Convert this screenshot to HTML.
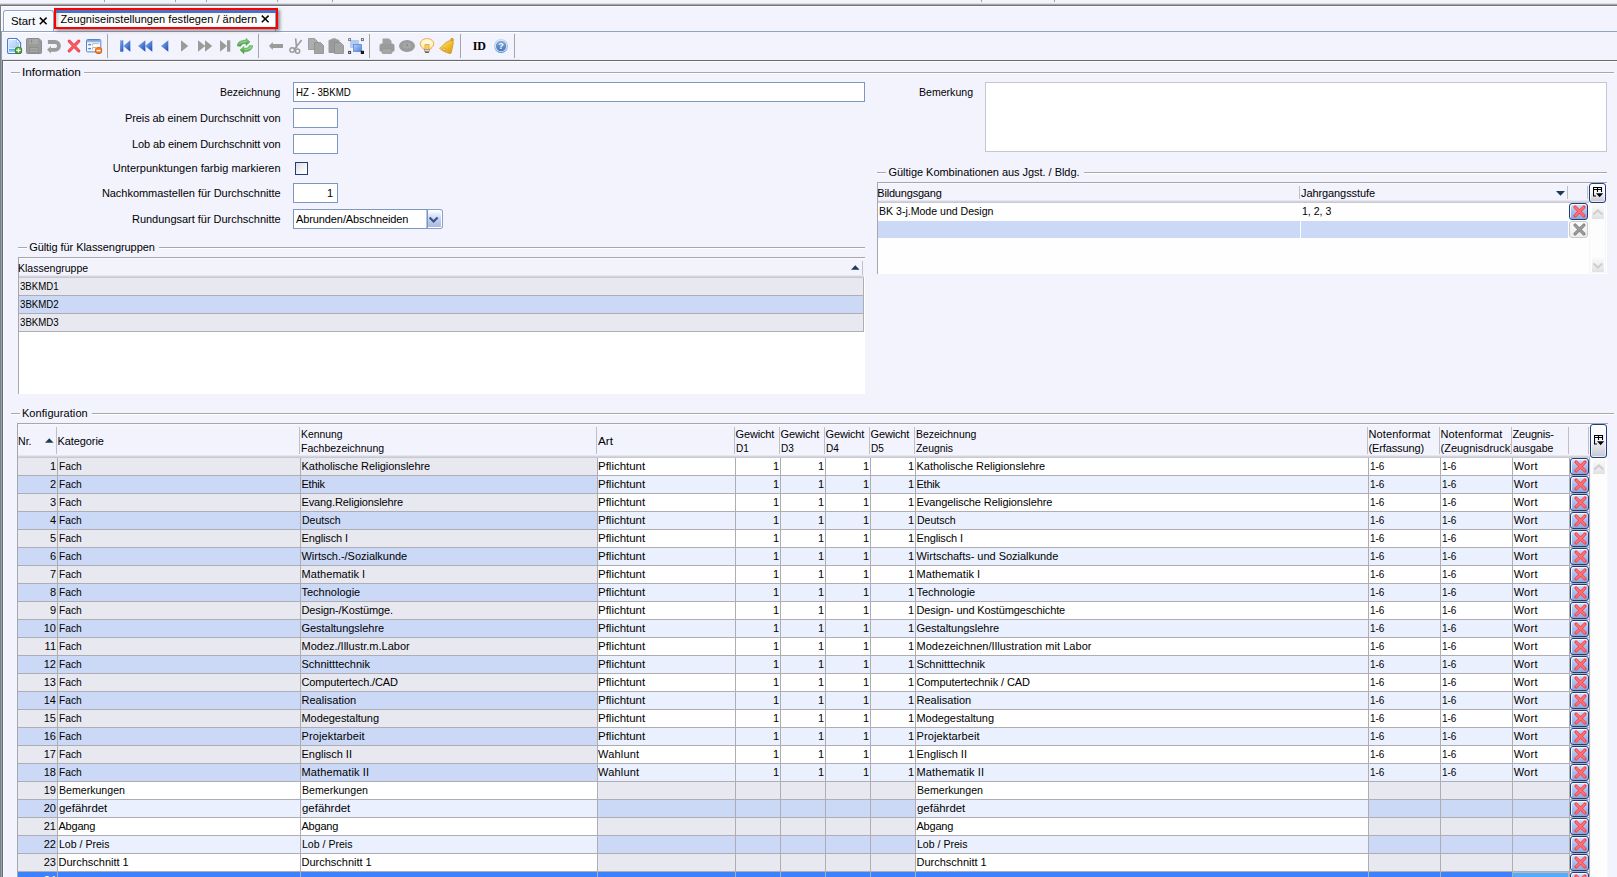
<!DOCTYPE html>
<html lang="de">
<head>
<meta charset="utf-8">
<title>Zeugniseinstellungen festlegen / ändern</title>
<style>
html,body{margin:0;padding:0;}
body{width:1617px;height:877px;overflow:hidden;background:#f3f3fe;font-family:"Liberation Sans",sans-serif;font-size:11px;color:#000;}
#app{position:relative;width:1617px;height:877px;overflow:hidden;background:#f3f3fe;}
#app div,#app svg{position:absolute;box-sizing:border-box;}
.t{height:17px;line-height:17px;white-space:nowrap;}
.sec{left:0;top:0;width:0;height:0;}
.w{color:#fff;}

</style>
</head>
<body>
<div id="app">
<div class="sec" role="banner" aria-label="Tabs und Werkzeugleiste">
<div style="left:104px;top:0px;width:1px;height:2px;background:#a2a2a8;"></div>
<div style="left:175px;top:0px;width:1px;height:2px;background:#a2a2a8;"></div>
<div style="left:206px;top:0px;width:1px;height:2px;background:#a2a2a8;"></div>
<div style="left:277px;top:0px;width:1px;height:2px;background:#a2a2a8;"></div>
<div style="left:332px;top:0px;width:1px;height:2px;background:#a2a2a8;"></div>
<div style="left:981px;top:0px;width:1px;height:2px;background:#a2a2a8;"></div>
<div style="left:1054px;top:0px;width:1px;height:2px;background:#a2a2a8;"></div>
<div style="left:0px;top:3px;width:1617px;height:1px;background:#dadae3;"></div>
<div style="left:0px;top:4px;width:1617px;height:1px;background:#a6a6ad;"></div>
<div style="left:0px;top:5px;width:1617px;height:1px;background:#747474;"></div>
<div style="left:2px;top:6px;width:1615px;height:1px;background:#fafaff;"></div>
<div style="left:0px;top:5px;width:1px;height:872px;background:#808080;"></div>
<div style="left:1px;top:6px;width:1px;height:25px;background:#fafaff;"></div>
<div style="left:1px;top:31px;width:1px;height:846px;background:#8fa3c1;"></div>
<div style="left:3px;top:10px;width:51px;height:21px;border:1px solid #8ea4c2;border-bottom:none;border-radius:3px 3px 0 0;background:#f8f8ff;box-shadow:inset 1px 1px 0 #fff;"></div>
<div class="t" style="left:11px;top:13px;transform:scaleX(1.0357);transform-origin:0 0;">Start</div>
<svg style="left:39px;top:17px" width="9" height="8" viewBox="0 0 9 8"><path d="M0.8 0.6 L7.6 7.2 M7.6 0.6 L0.8 7.2" stroke="#000" stroke-width="1.5" fill="none"/></svg>
<div style="left:2px;top:31px;width:1615px;height:1px;background:#8ea4c2;"></div>
<div style="left:2px;top:32px;width:518px;height:1px;background:#ffffff;"></div>
<div style="left:56px;top:10px;width:220px;height:21px;border-right:1px solid #8ea4c2;background:linear-gradient(#f4f2ea,#fff 60%);"></div>
<div style="left:56px;top:10px;width:220px;height:3px;background:#4a70c8;"></div>
<div style="left:56px;top:13px;width:4px;height:16px;background:linear-gradient(90deg,rgba(140,140,140,.45),rgba(255,255,255,0));"></div>
<div class="t" style="left:60.6px;top:11px;letter-spacing:0.035px;">Zeugniseinstellungen festlegen / ändern</div>
<svg style="left:260.5px;top:15px" width="9" height="8" viewBox="0 0 9 8"><path d="M0.8 0.6 L7.6 7.2 M7.6 0.6 L0.8 7.2" stroke="#000" stroke-width="1.5" fill="none"/></svg>
<div style="left:54px;top:8px;width:224px;height:21px;border:2px solid #ff0000;box-shadow:2px 2px 3px rgba(60,60,70,.55);"></div>
<div style="left:107px;top:34px;width:1px;height:24px;background:#a5a5a5;"></div>
<div style="left:258px;top:34px;width:1px;height:24px;background:#a5a5a5;"></div>
<div style="left:369px;top:34px;width:1px;height:24px;background:#a5a5a5;"></div>
<div style="left:460px;top:34px;width:1px;height:24px;background:#a5a5a5;"></div>
<div style="left:514px;top:34px;width:1px;height:24px;background:#a5a5a5;"></div>
<div style="left:2px;top:59px;width:518px;height:1px;background:#e4e4ee;"></div>
<div style="left:2px;top:60px;width:1615px;height:1px;background:#6a6a6a;"></div>
<div style="left:2px;top:60px;width:1px;height:817px;background:#6a6a6a;"></div>
<div style="left:3px;top:61px;width:1614px;height:1px;background:#fcfcff;"></div>
<div style="left:3px;top:61px;width:1px;height:816px;background:#fcfcff;"></div>
<svg style="left:7px;top:38px" width="16" height="16" viewBox="0 0 16 16"><defs><linearGradient id="gd" x1="0" y1="0" x2="1" y2="1"><stop offset="0" stop-color="#d9e8fc"/><stop offset="1" stop-color="#a6c9f4"/></linearGradient></defs>
<path d="M0.6 2 Q0.6 0.5 2 0.5 H9.6 L13.6 4.6 V14 Q13.6 15.5 12.2 15.5 H2 Q0.6 15.5 0.6 14 Z" fill="#fff" stroke="#3d7bd3" stroke-width="1.1"/>
<path d="M2 2 H9 L12.2 5.2 V10.6 H2 Z" fill="url(#gd)"/>
<path d="M9.4 1.2 V4.8 H13" fill="#fff" stroke="#8db5ea" stroke-width=".7"/>
<rect x="2" y="11.1" width="9" height="2.5" fill="#4ea5f0"/><rect x="2" y="12" width="9" height=".6" fill="#9fd0f8"/>
<circle cx="11.5" cy="12.4" r="3.7" fill="#2f7f14"/><circle cx="11.5" cy="12.2" r="2.9" fill="#57a733"/>
<path d="M11.5 10.2 V14.6 M9.3 12.4 H13.7" stroke="#fff" stroke-width="1.4"/></svg>
<svg style="left:26px;top:38px" width="16" height="16" viewBox="0 0 16 16"><path d="M0.5 1.5 Q0.5 0.5 1.5 0.5 H13 L15.5 3 V14.5 Q15.5 15.5 14.5 15.5 H1.5 Q0.5 15.5 0.5 14.5 Z" fill="#9b9b9b" stroke="#8c8c8c"/>
<rect x="3" y="1" width="9" height="5" fill="#a8a8a8"/><rect x="5" y="1.5" width="1.2" height="3.5" fill="#8a8a8a"/>
<rect x="3.5" y="9.5" width="9" height="5" fill="#a6a6a6" stroke="#8e8e8e" stroke-width=".8"/><path d="M4 12 H12" stroke="#8e8e8e" stroke-width=".8"/></svg>
<svg style="left:47px;top:39px" width="15" height="16" viewBox="0 0 15 16"><path d="M0.9 3 H8.1 A3.9 3.9 0 0 1 8.1 10.8 H3.6" fill="none" stroke="#9b9b9b" stroke-width="3.8"/>
<path d="M0.1 10.8 L3.9 7.1 V14.6 Z" fill="#9b9b9b"/></svg>
<svg style="left:67px;top:39px" width="14" height="14" viewBox="0 0 14 14"><path d="M2.2 2.2 L11.8 11.8 M11.8 2.2 L2.2 11.8" stroke="#f0474b" stroke-width="3.1" stroke-linecap="round"/>
<path d="M2.6 2.6 L11.4 11.4 M11.4 2.6 L2.6 11.4" stroke="#f86468" stroke-width="1.2" stroke-linecap="round"/></svg>
<svg style="left:86px;top:39px" width="17" height="16" viewBox="0 0 17 16"><defs><linearGradient id="gf" x1="0" y1="0" x2="0" y2="1"><stop offset="0" stop-color="#6f9de0"/><stop offset="1" stop-color="#a9c7f0"/></linearGradient></defs>
<rect x="0.5" y="0.5" width="14.3" height="12.4" rx="1" fill="#f6f5ef" stroke="#5585cf"/>
<rect x="1" y="1" width="13.3" height="2.4" fill="url(#gf)"/>
<path d="M2.2 5.7 H5 M2.2 9.6 H5" stroke="#4c7fe0" stroke-width="1.3"/>
<path d="M6.6 6.6 V4.7 H13 M6.6 10.4 V8.6 H10" stroke="#b4b4b4" stroke-width="1" fill="none"/>
<path d="M7.2 5.4 H13 V7 H7.2 Z M7.2 9.2 H10 V10.6 H7.2 Z" fill="#fff"/>
<circle cx="12.6" cy="11.5" r="3.6" fill="#cf5a0c"/><circle cx="12.6" cy="11.2" r="2.9" fill="#f07c22"/>
<path d="M10.6 11.6 H14.6" stroke="#fff" stroke-width="1.5"/></svg>
<svg style="left:120px;top:40px" width="11" height="12" viewBox="0 0 11 12"><defs><linearGradient id="gb1" x1="0" y1="0" x2="1" y2="1"><stop offset="0" stop-color="#8fbcf2"/><stop offset="1" stop-color="#1747b8"/></linearGradient></defs><rect x="0" y="0.3" width="3.3" height="11.4" fill="url(#gb1)"/><path d="M10.3 0.3 L3.3 6 L10.3 11.7 Z" fill="url(#gb1)"/></svg>
<svg style="left:138px;top:40px" width="15" height="12" viewBox="0 0 15 12"><defs><linearGradient id="gb2" x1="0" y1="0" x2="1" y2="1"><stop offset="0" stop-color="#8fbcf2"/><stop offset="1" stop-color="#1747b8"/></linearGradient></defs><path d="M7.4 0.3 L0 6 L7.4 11.7 Z" fill="url(#gb2)"/><path d="M14.3 0.3 L7 6 L14.3 11.7 Z" fill="url(#gb2)"/></svg>
<svg style="left:161px;top:40px" width="8" height="12" viewBox="0 0 8 12"><defs><linearGradient id="gb3" x1="0" y1="0" x2="1" y2="1"><stop offset="0" stop-color="#8fbcf2"/><stop offset="1" stop-color="#1747b8"/></linearGradient></defs><path d="M7.3 0.3 L0 6 L7.3 11.7 Z" fill="url(#gb3)"/></svg>
<svg style="left:181px;top:40px" width="8" height="12" viewBox="0 0 8 12"><path d="M0 0.3 L7.3 6 L0 11.7 Z" fill="#9b9b9b"/></svg>
<svg style="left:198px;top:40px" width="15" height="12" viewBox="0 0 15 12"><path d="M0 0.3 L7.3 6 L0 11.7 Z" fill="#9b9b9b"/><path d="M7 0.3 L14.3 6 L7 11.7 Z" fill="#9b9b9b"/></svg>
<svg style="left:220px;top:40px" width="11" height="12" viewBox="0 0 11 12"><path d="M0 0.3 L7 6 L0 11.7 Z" fill="#9b9b9b"/><rect x="7" y="0.3" width="3.3" height="11.4" fill="#9b9b9b"/></svg>
<svg style="left:237px;top:38px" width="16" height="16" viewBox="0 0 16 16"><defs><linearGradient id="gr" x1="0" y1="0" x2="0" y2="1"><stop offset="0" stop-color="#8fd088"/><stop offset=".55" stop-color="#5db257"/><stop offset="1" stop-color="#3f9a3c"/></linearGradient></defs>
<path d="M0.3 8 C0.4 4.4 3.6 2.1 9 2.1 V0.3 L13 3.9 L9 7.5 V5.6 C6.2 5.6 4.4 6.3 3.6 8.2 Z" fill="url(#gr)" stroke="#48a044" stroke-width=".5"/>
<path d="M15.7 7.6 C15.6 11.4 12.4 13.8 7 13.8 V15.7 L3 12 L7 8.4 V10.4 C9.8 10.4 11.6 9.7 12.4 7.6 Z" fill="url(#gr)" stroke="#48a044" stroke-width=".5"/>
<path d="M1.6 6.6 Q3.6 3.6 9 3.4" stroke="#b5e2ae" stroke-width=".8" fill="none"/><path d="M14.2 9.2 Q12.6 11.6 7.4 11.8" stroke="#b5e2ae" stroke-width=".8" fill="none"/></svg>
<svg style="left:268px;top:42px" width="16" height="8" viewBox="0 0 16 8"><path d="M1 4 L4.8 0 V2.1 H15 V5.9 H4.8 V8 Z" fill="#9b9b9b"/></svg>
<svg style="left:289px;top:38px" width="14" height="16" viewBox="0 0 14 16"><path d="M6.6 0.4 L7.6 10 M12.6 2 L5.2 11.4" stroke="#9b9b9b" stroke-width="1.6" fill="none"/>
<circle cx="3.2" cy="12" r="2.3" fill="none" stroke="#9b9b9b" stroke-width="1.5"/><circle cx="8.6" cy="13.2" r="2.1" fill="none" stroke="#9b9b9b" stroke-width="1.5"/></svg>
<svg style="left:308px;top:38px" width="16" height="16" viewBox="0 0 16 16"><path d="M0.5 0.5 H6.5 L9.5 3.5 V11.5 H0.5 Z" fill="#adadad" stroke="#919191" stroke-width=".8"/>
<path d="M6.5 4.5 H12.5 L15.5 7.5 V15.5 H6.5 Z" fill="#a3a3a3" stroke="#8d8d8d" stroke-width=".8"/></svg>
<svg style="left:328px;top:38px" width="16" height="16" viewBox="0 0 16 16"><path d="M0.5 3 Q0.5 1.5 2 1.5 H3 Q4 0.3 6 0.3 Q8 0.3 9 1.5 H10 Q11.5 1.5 11.5 3 V14 Q11.5 15 10.5 15 H1.5 Q0.5 15 0.5 14 Z" fill="#9b9b9b"/>
<path d="M6.5 4.5 H12.5 L15.5 7.5 V15.5 H6.5 Z" fill="#a3a3a3" stroke="#8d8d8d" stroke-width=".8"/></svg>
<svg style="left:348px;top:38px" width="16" height="16" viewBox="0 0 16 16"><defs><linearGradient id="gs" x1="0" y1="0" x2="1" y2="1"><stop offset="0" stop-color="#b9d0f6"/><stop offset="1" stop-color="#4f83d6"/></linearGradient></defs>
<rect x="2.5" y="2.5" width="8" height="7" fill="#b4ccf5" stroke="#a0bcee" stroke-width=".6"/>
<rect x="5.5" y="6.5" width="8" height="7" fill="url(#gs)" stroke="#4a7fd8" stroke-width=".7"/>
<rect x="0.6" y="0.6" width="2" height="2" fill="#f3f3fe" stroke="#777" stroke-width=".9"/>
<rect x="13.4" y="0.6" width="2" height="2" fill="#f3f3fe" stroke="#666" stroke-width=".9"/>
<rect x="0.6" y="13.4" width="2" height="2" fill="#f3f3fe" stroke="#444" stroke-width="1"/>
<rect x="13.4" y="13.4" width="2" height="2" fill="#ddd" stroke="#111" stroke-width="1.2"/></svg>
<svg style="left:379px;top:38px" width="16" height="16" viewBox="0 0 16 16"><path d="M3.5 0.5 H10 L12.5 3 V7 H3.5 Z" fill="#a1a1a1"/>
<path d="M0.5 8 Q0.5 5.5 3 5.5 H13 Q15.5 5.5 15.5 8 V12.5 Q15.5 13.5 14.5 13.5 H1.5 Q0.5 13.5 0.5 12.5 Z" fill="#9b9b9b"/>
<rect x="3" y="10.5" width="10" height="5" rx="1" fill="#a6a6a6" stroke="#909090" stroke-width=".7"/></svg>
<svg style="left:399px;top:39.8px" width="16" height="12" viewBox="0 0 16 12"><ellipse cx="8" cy="6" rx="8" ry="5.9" fill="#9b9b9b"/><ellipse cx="8" cy="5.4" rx="4.4" ry="3" fill="#a6a6a6"/><circle cx="8" cy="5" r="1" fill="#858585"/></svg>
<svg style="left:419px;top:38px" width="16" height="16" viewBox="0 0 16 16"><defs><radialGradient id="gl" cx=".5" cy=".4" r=".6"><stop offset="0" stop-color="#fffef0"/><stop offset=".7" stop-color="#fdf3c4"/><stop offset="1" stop-color="#f6c56a"/></radialGradient></defs>
<path d="M8 0.6 C3.6 0.6 1.2 3.4 1.2 6 C1.2 8.6 3.6 9.6 5 11.6 H11 C12.4 9.6 14.8 8.6 14.8 6 C14.8 3.4 12.4 0.6 8 0.6 Z" fill="url(#gl)" stroke="#f0a04a" stroke-width=".9"/>
<rect x="6" y="6.4" width="4" height="5" fill="#f8d648" stroke="#eb9c3c" stroke-width=".8"/>
<rect x="5.4" y="11.6" width="5.2" height="2" fill="#d8d8d8" stroke="#8e8e8e" stroke-width=".6"/>
<rect x="6" y="13.6" width="4" height="1.4" fill="#666"/></svg>
<svg style="left:439px;top:38px" width="16" height="16" viewBox="0 0 16 16"><defs><linearGradient id="gbell" x1="0" y1="0" x2="1" y2="1"><stop offset="0" stop-color="#fde98e"/><stop offset=".55" stop-color="#f0bd2c"/><stop offset="1" stop-color="#d3940f"/></linearGradient></defs>
<circle cx="13" cy="1.8" r="1.5" fill="#e9a72a" stroke="#c58414" stroke-width=".6"/>
<path d="M12.4 2.6 C8.6 2.4 5.6 5.4 3.6 7.8 C2.4 9.2 1 9.6 0.6 10.2 C0.4 11 6.4 14.8 11.4 15.6 C12.4 15.6 12.6 13.4 13 11.2 C13.6 8.4 14.6 5.6 14.2 3.4 Z" fill="url(#gbell)" stroke="#cf9020" stroke-width=".7"/>
<ellipse cx="5.4" cy="11.4" rx="1.7" ry="1.1" fill="#fff2b8" stroke="#b87a14" stroke-width=".6" transform="rotate(28 5.4 11.4)"/></svg>
<div style="left:472.8px;top:38px;height:17px;line-height:17px;font-family:'Liberation Serif',serif;font-weight:bold;font-size:12px;letter-spacing:-0.2px;">ID</div>
<svg style="left:494px;top:39px" width="15" height="15" viewBox="0 0 15 15"><defs><linearGradient id="gh" x1="0" y1="0" x2="0" y2="1"><stop offset="0" stop-color="#86a8d6"/><stop offset="1" stop-color="#4277b9"/></linearGradient>
<linearGradient id="gh2" x1="0" y1="0" x2="0" y2="1"><stop offset="0" stop-color="#c2d8f5"/><stop offset=".7" stop-color="#9dc0ee"/><stop offset="1" stop-color="#4f86d2"/></linearGradient></defs>
<circle cx="7.1" cy="7" r="7" fill="url(#gh2)"/><circle cx="7.1" cy="7" r="5.9" fill="#e4eefb"/><circle cx="7.1" cy="7" r="5.2" fill="url(#gh)"/>
<text x="7.1" y="10.2" text-anchor="middle" font-family="Liberation Sans, sans-serif" font-weight="bold" font-size="9" fill="#fff">?</text></svg>
</div>
<div class="sec" role="form" aria-label="Information">
<div style="left:11px;top:72px;width:9px;height:1px;background:#a7a7ad;"></div>
<div style="left:11px;top:73px;width:9px;height:1px;background:#ffffff;"></div>
<div style="left:83.9px;top:72px;width:1530.1px;height:1px;background:#a7a7ad;"></div>
<div style="left:83.9px;top:73px;width:1530.1px;height:1px;background:#ffffff;"></div>
<div class="t" style="left:21.9px;top:64px;transform:scaleX(1.0703);transform-origin:0 0;">Information</div>
<div class="t" style="left:220.29px;top:84px;transform:scaleX(0.9482);transform-origin:0 0;">Bezeichnung</div>
<div class="t" style="left:124.98px;top:110px;letter-spacing:-0.091px;">Preis ab einem Durchschnitt von</div>
<div class="t" style="left:131.98px;top:136px;letter-spacing:-0.108px;">Lob ab einem Durchschnitt von</div>
<div class="t" style="left:112.68px;top:160px;letter-spacing:0.032px;">Unterpunktungen farbig markieren</div>
<div class="t" style="left:101.88px;top:185px;letter-spacing:-0.031px;">Nachkommastellen für Durchschnitte</div>
<div class="t" style="left:131.97px;top:211px;letter-spacing:-0.02px;">Rundungsart für Durchschnitte</div>
<div style="left:293px;top:82px;width:572px;height:20px;background:#fff;border:1px solid #7c98c2;"></div>
<div class="t" style="left:296px;top:84px;transform:scaleX(0.8767);transform-origin:0 0;">HZ - 3BKMD</div>
<div style="left:293px;top:108px;width:45px;height:20px;background:#fff;border:1px solid #7c98c2;"></div>
<div style="left:293px;top:134px;width:45px;height:20px;background:#fff;border:1px solid #7c98c2;"></div>
<div style="left:295px;top:162px;width:13px;height:13px;border:1px solid #1c3f7c;background:linear-gradient(135deg,#dcdce0,#fafafa 70%,#fff);"></div>
<div style="left:293px;top:183px;width:45px;height:20px;background:#fff;border:1px solid #7c98c2;"></div>
<div class="t" style="left:326.88px;top:185px;">1</div>
<div style="left:293px;top:209px;width:135px;height:20px;background:#fff;border:1px solid #7c98c2;"></div>
<div class="t" style="left:296px;top:211px;letter-spacing:-0.103px;">Abrunden/Abschneiden</div>
<div style="left:426px;top:210px;width:1px;height:18px;background:#b5c5de;"></div>
<div style="left:428px;top:209px;width:15px;height:20px;border:1px solid #86a0c6;border-left:none;border-radius:0 3px 3px 0;background:#fff;"></div>
<div style="left:428px;top:211px;width:13px;height:16px;border-radius:1px;background:linear-gradient(#fbfcff,#c3d1f6 50%,#aab9df);"></div>
<svg style="left:428px;top:215px" width="12" height="9" viewBox="0 0 12 9"><path d="M1.6 2.4 L5.6 6.4 L9.6 2.4" stroke="#3c5479" stroke-width="2.1" fill="none"/></svg>
<div class="t" style="left:918.5px;top:84px;transform:scaleX(0.9602);transform-origin:0 0;">Bemerkung</div>
<div style="left:985px;top:82px;width:622px;height:70px;background:#fff;border:1px solid #c6c6cf;"></div>
<div style="left:877px;top:172px;width:9px;height:1px;background:#a7a7ad;"></div>
<div style="left:877px;top:173px;width:9px;height:1px;background:#ffffff;"></div>
<div style="left:1084.0px;top:172px;width:523.0px;height:1px;background:#a7a7ad;"></div>
<div style="left:1084.0px;top:173px;width:523.0px;height:1px;background:#ffffff;"></div>
<div class="t" style="left:888.5px;top:164px;letter-spacing:-0.041px;">Gültige Kombinationen aus Jgst. / Bldg.</div>
<div style="left:878px;top:203px;width:729px;height:71px;background:#fefeff;"></div>
<div style="left:877px;top:182px;width:730px;height:1px;background:#a7a7ad;"></div>
<div style="left:877px;top:183px;width:730px;height:1px;background:#f9f9ff;"></div>
<div style="left:877px;top:182px;width:1px;height:92px;background:#a7a7ad;"></div>
<div style="left:878px;top:200px;width:711px;height:1px;background:#e6e6ee;"></div>
<div style="left:878px;top:201px;width:711px;height:1px;background:#d4d4dc;"></div>
<div style="left:878px;top:202px;width:711px;height:1px;background:#c9c9d2;"></div>
<div class="t" style="left:877.3px;top:185px;letter-spacing:-0.195px;">Bildungsgang</div>
<div class="t" style="left:1301px;top:185px;letter-spacing:-0.092px;">Jahrgangsstufe</div>
<div style="left:1299px;top:186px;width:1px;height:13px;background:#bfbfc7;"></div>
<div style="left:1567px;top:186px;width:1px;height:13px;background:#bfbfc7;"></div>
<div style="left:1587px;top:186px;width:1px;height:13px;background:#bfbfc7;"></div>
<svg style="left:1556px;top:191px" width="9" height="5" viewBox="0 0 9 5"><path d="M0 0 L4.5 4.7 L9 0 Z" fill="#1d3a56"/></svg>
<div style="left:1589px;top:183px;width:17px;height:20px;border:1px solid #1c3f7c;border-radius:3px;background:linear-gradient(#ffffff,#f6f6fb 45%,#c6c6d3);box-shadow:inset 0 0 0 1px rgba(255,255,255,.6);"></div>
<svg style="left:1592.5px;top:186.6px" width="11" height="11" viewBox="0 0 11 11"><path d="M0.5 0.5 H8.5 M0.5 2.5 H8.5 M0.5 0 V9 H3 M4.5 0.5 V5 M8.5 0 V5" stroke="#000" stroke-width="1.1" fill="none"/><path d="M3 6.2 H10.2 L6.6 10.2 Z" fill="#000"/></svg>
<div class="t" style="left:879px;top:203px;transform:scaleX(0.9596);transform-origin:0 0;">BK 3-j.Mode und Design</div>
<div class="t" style="left:1302px;top:203px;transform:scaleX(0.9586);transform-origin:0 0;">1, 2, 3</div>
<div style="left:878px;top:221px;width:422px;height:17px;background:#cbd9f7;"></div>
<div style="left:1301px;top:221px;width:267px;height:17px;background:#cbd9f7;"></div>
<div style="left:1569px;top:203px;width:19px;height:17px;border:1px solid #1c3f7c;border-radius:3px;background:linear-gradient(#d4e2fb,#a9c0ee 45%,#8ca7e0);box-shadow:inset 1px 1px 0 rgba(255,255,255,.85);"></div>
<svg style="left:1572.6px;top:204.5px" width="13" height="13" viewBox="0 0 13 13"><path d="M2.1 2.1 L10.9 10.9 M10.9 2.1 L2.1 10.9" stroke="#f64448" stroke-width="3.3" stroke-linecap="round"/><path d="M2.4 2.4 L10.6 10.6 M10.6 2.4 L2.4 10.6" stroke="#ff7478" stroke-width="1.5" stroke-linecap="round"/></svg>
<div style="left:1569px;top:221px;width:19px;height:17px;border:1px solid #c9c9c9;border-radius:3px;background:linear-gradient(#fbfbfb,#ececec);"></div>
<svg style="left:1572.6px;top:222.5px" width="13" height="13" viewBox="0 0 13 13"><path d="M2.1 2.1 L10.9 10.9 M10.9 2.1 L2.1 10.9" stroke="#8a8a8a" stroke-width="3.3" stroke-linecap="round"/><path d="M2.4 2.4 L10.6 10.6 M10.6 2.4 L2.4 10.6" stroke="#9a9a9a" stroke-width="1.5" stroke-linecap="round"/></svg>
<div style="left:1589px;top:203px;width:17px;height:70px;background:#f5f5fc;"></div>
<div style="left:1590px;top:203px;width:15px;height:69px;background:#fdfdfe;"></div>
<div style="left:1592px;top:204px;width:12px;height:15px;background:linear-gradient(#fbfbfc,#f0f0f1 50%,#e1e1e3);"></div>
<svg style="left:1592px;top:207.5px" width="12" height="9" viewBox="0 0 12 9"><path d="M1.4 6.6 L5.9 2.4 L10.4 6.6" stroke="#cfcfd1" stroke-width="2.1" fill="none"/></svg>
<div style="left:1592px;top:257px;width:12px;height:15px;background:linear-gradient(#fbfbfc,#f0f0f1 50%,#e1e1e3);"></div>
<svg style="left:1592px;top:260.5px" width="12" height="9" viewBox="0 0 12 9"><path d="M1.4 2.4 L5.9 6.6 L10.4 2.4" stroke="#cfcfd1" stroke-width="2.1" fill="none"/></svg>
<div style="left:18px;top:247px;width:9px;height:1px;background:#a7a7ad;"></div>
<div style="left:18px;top:248px;width:9px;height:1px;background:#ffffff;"></div>
<div style="left:159.2px;top:247px;width:705.8px;height:1px;background:#a7a7ad;"></div>
<div style="left:159.2px;top:248px;width:705.8px;height:1px;background:#ffffff;"></div>
<div class="t" style="left:29.2px;top:239px;letter-spacing:-0.061px;">Gültig für Klassengruppen</div>
<div style="left:19px;top:258px;width:846px;height:136px;background:#ffffff;"></div>
<div style="left:19px;top:258px;width:846px;height:18px;background:#f3f3fe;"></div>
<div style="left:18px;top:257px;width:847px;height:1px;background:#a7a7ad;"></div>
<div style="left:18px;top:258px;width:847px;height:1px;background:#f9f9ff;"></div>
<div style="left:18px;top:257px;width:1px;height:137px;background:#a7a7ad;"></div>
<div style="left:19px;top:275px;width:845px;height:1px;background:#e6e6ee;"></div>
<div style="left:19px;top:276px;width:845px;height:1px;background:#d4d4dc;"></div>
<div style="left:19px;top:277px;width:845px;height:1px;background:#c9c9d2;"></div>
<div class="t" style="left:18px;top:260px;transform:scaleX(0.9554);transform-origin:0 0;">Klassengruppe</div>
<svg style="left:851px;top:265px" width="9" height="5" viewBox="0 0 9 5"><path d="M0 4.7 L4.3 0.2 L8.6 4.7 Z" fill="#1d3a56"/></svg>
<div style="left:862px;top:261px;width:1px;height:14px;background:#bfbfc7;"></div>
<div style="left:19px;top:278px;width:844px;height:17px;background:#e8e8f1;"></div>
<div style="left:19px;top:295px;width:845px;height:1px;background:#adadb2;"></div>
<div class="t" style="left:20px;top:278px;transform:scaleX(0.8747);transform-origin:0 0;">3BKMD1</div>
<div style="left:19px;top:296px;width:844px;height:17px;background:#cbd9f7;"></div>
<div style="left:19px;top:313px;width:845px;height:1px;background:#adadb2;"></div>
<div class="t" style="left:20px;top:296px;transform:scaleX(0.8793);transform-origin:0 0;">3BKMD2</div>
<div style="left:19px;top:314px;width:844px;height:17px;background:#e8e8f1;"></div>
<div style="left:19px;top:331px;width:845px;height:1px;background:#adadb2;"></div>
<div class="t" style="left:20px;top:314px;transform:scaleX(0.8793);transform-origin:0 0;">3BKMD3</div>
<div style="left:863px;top:278px;width:1px;height:54px;background:#adadb2;"></div>
</div>
<div class="sec" role="grid" aria-label="Konfiguration">
<div style="left:11px;top:413px;width:9px;height:1px;background:#a7a7ad;"></div>
<div style="left:11px;top:414px;width:9px;height:1px;background:#ffffff;"></div>
<div style="left:92.4px;top:413px;width:1521.6px;height:1px;background:#a7a7ad;"></div>
<div style="left:92.4px;top:414px;width:1521.6px;height:1px;background:#ffffff;"></div>
<div class="t" style="left:21.9px;top:405px;letter-spacing:0.083px;">Konfiguration</div>
<div style="left:17px;top:423px;width:1591px;height:1px;background:#a7a7ad;"></div>
<div style="left:17px;top:424px;width:1573px;height:1px;background:#f9f9ff;"></div>
<div style="left:17px;top:423px;width:1px;height:454px;background:#a7a7ad;"></div>
<div style="left:18px;top:455px;width:1572px;height:1px;background:#e6e6ee;"></div>
<div style="left:18px;top:456px;width:1572px;height:1px;background:#d4d4dc;"></div>
<div style="left:18px;top:457px;width:1572px;height:1px;background:#c9c9d2;"></div>
<div style="left:56px;top:427px;width:1px;height:27px;background:#bfbfc7;"></div>
<div style="left:299px;top:427px;width:1px;height:27px;background:#bfbfc7;"></div>
<div style="left:596px;top:427px;width:1px;height:27px;background:#bfbfc7;"></div>
<div style="left:734px;top:427px;width:1px;height:27px;background:#bfbfc7;"></div>
<div style="left:779px;top:427px;width:1px;height:27px;background:#bfbfc7;"></div>
<div style="left:824px;top:427px;width:1px;height:27px;background:#bfbfc7;"></div>
<div style="left:869px;top:427px;width:1px;height:27px;background:#bfbfc7;"></div>
<div style="left:914px;top:427px;width:1px;height:27px;background:#bfbfc7;"></div>
<div style="left:1367px;top:427px;width:1px;height:27px;background:#bfbfc7;"></div>
<div style="left:1439px;top:427px;width:1px;height:27px;background:#bfbfc7;"></div>
<div style="left:1511px;top:427px;width:1px;height:27px;background:#bfbfc7;"></div>
<div style="left:1568px;top:427px;width:1px;height:27px;background:#bfbfc7;"></div>
<div style="left:1588px;top:427px;width:1px;height:27px;background:#bfbfc7;"></div>
<div class="t" style="left:17.5px;top:433px;transform:scaleX(0.9643);transform-origin:0 0;">Nr.</div>
<svg style="left:44.7px;top:438.2px" width="9" height="5" viewBox="0 0 9 5"><path d="M0 4.7 L4.3 0.2 L8.6 4.7 Z" fill="#1d3a56"/></svg>
<div class="t" style="left:57.5px;top:433px;letter-spacing:-0.084px;">Kategorie</div>
<div class="t" style="left:300.5px;top:426px;transform:scaleX(0.9402);transform-origin:0 0;">Kennung</div>
<div class="t" style="left:300.5px;top:440px;transform:scaleX(0.9571);transform-origin:0 0;">Fachbezeichnung</div>
<div class="t" style="left:597.5px;top:433px;transform:scaleX(1.0643);transform-origin:0 0;">Art</div>
<div class="t" style="left:735.5px;top:426px;letter-spacing:-0.147px;">Gewicht</div>
<div class="t" style="left:735.5px;top:440px;transform:scaleX(0.9108);transform-origin:0 0;">D1</div>
<div class="t" style="left:780.5px;top:426px;letter-spacing:-0.147px;">Gewicht</div>
<div class="t" style="left:780.5px;top:440px;transform:scaleX(0.9108);transform-origin:0 0;">D3</div>
<div class="t" style="left:825.5px;top:426px;letter-spacing:-0.147px;">Gewicht</div>
<div class="t" style="left:825.5px;top:440px;transform:scaleX(0.9108);transform-origin:0 0;">D4</div>
<div class="t" style="left:870.5px;top:426px;letter-spacing:-0.147px;">Gewicht</div>
<div class="t" style="left:870.5px;top:440px;transform:scaleX(0.9108);transform-origin:0 0;">D5</div>
<div class="t" style="left:915.5px;top:426px;transform:scaleX(0.9482);transform-origin:0 0;">Bezeichnung</div>
<div class="t" style="left:915.5px;top:440px;transform:scaleX(0.9462);transform-origin:0 0;">Zeugnis</div>
<div class="t" style="left:1368.5px;top:426px;letter-spacing:0.123px;">Notenformat</div>
<div class="t" style="left:1368.5px;top:440px;letter-spacing:-0.119px;">(Erfassung)</div>
<div class="t" style="left:1440.5px;top:426px;letter-spacing:0.123px;">Notenformat</div>
<div class="t" style="left:1440.5px;top:440px;width:70.5px;overflow:hidden;">(Zeugnisdruck)</div>
<div class="t" style="left:1512.5px;top:426px;letter-spacing:-0.191px;">Zeugnis-</div>
<div class="t" style="left:1512.5px;top:440px;transform:scaleX(0.9551);transform-origin:0 0;">ausgabe</div>
<div style="left:1590px;top:424px;width:17px;height:34px;border:1px solid #1c3f7c;border-radius:3px;background:linear-gradient(#ffffff,#f6f6fb 45%,#c6c6d3);box-shadow:inset 0 0 0 1px rgba(255,255,255,.6);"></div>
<svg style="left:1593.5px;top:435px" width="11" height="11" viewBox="0 0 11 11"><path d="M0.5 0.5 H8.5 M0.5 2.5 H8.5 M0.5 0 V9 H3 M4.5 0.5 V5 M8.5 0 V5" stroke="#000" stroke-width="1.1" fill="none"/><path d="M3 6.2 H10.2 L6.6 10.2 Z" fill="#000"/></svg>
<div style="left:18px;top:458px;width:579px;height:17px;background:#e8e8f1;"></div>
<div style="left:598px;top:458px;width:971px;height:17px;background:#ffffff;"></div>
<div style="left:18px;top:475px;width:1572px;height:1px;background:#adadb2;"></div>
<div class="t" style="left:49.88px;top:458px;">1</div>
<div class="t" style="left:58.5px;top:458px;transform:scaleX(0.9327);transform-origin:0 0;">Fach</div>
<div class="t" style="left:301.5px;top:458px;letter-spacing:-0.037px;">Katholische Religionslehre</div>
<div class="t" style="left:598px;top:458px;transform:scaleX(1.0423);transform-origin:0 0;">Pflichtunt</div>
<div class="t" style="left:772.88px;top:458px;">1</div>
<div class="t" style="left:817.88px;top:458px;">1</div>
<div class="t" style="left:862.88px;top:458px;">1</div>
<div class="t" style="left:907.88px;top:458px;">1</div>
<div class="t" style="left:1370.3px;top:458px;transform:scaleX(0.9062);transform-origin:0 0;">1-6</div>
<div class="t" style="left:1442.3px;top:458px;transform:scaleX(0.9062);transform-origin:0 0;">1-6</div>
<div class="t" style="left:1513.7px;top:458px;letter-spacing:0.245px;">Wort</div>
<div class="t" style="left:916.5px;top:458px;letter-spacing:-0.037px;">Katholische Religionslehre</div>
<div style="left:1570px;top:458px;width:19px;height:17px;border:1px solid #1c3f7c;border-radius:3px;background:linear-gradient(#d4e2fb,#a9c0ee 45%,#8ca7e0);box-shadow:inset 1px 1px 0 rgba(255,255,255,.85);"></div>
<svg style="left:1573.6px;top:459.5px" width="13" height="13" viewBox="0 0 13 13"><path d="M2.1 2.1 L10.9 10.9 M10.9 2.1 L2.1 10.9" stroke="#f64448" stroke-width="3.3" stroke-linecap="round"/><path d="M2.4 2.4 L10.6 10.6 M10.6 2.4 L2.4 10.6" stroke="#ff7478" stroke-width="1.5" stroke-linecap="round"/></svg>
<div style="left:18px;top:476px;width:579px;height:17px;background:#cbd9f7;"></div>
<div style="left:598px;top:476px;width:971px;height:17px;background:#eaf0fe;"></div>
<div style="left:18px;top:493px;width:1572px;height:1px;background:#adadb2;"></div>
<div class="t" style="left:49.88px;top:476px;">2</div>
<div class="t" style="left:58.5px;top:476px;transform:scaleX(0.9327);transform-origin:0 0;">Fach</div>
<div class="t" style="left:301.5px;top:476px;letter-spacing:-0.214px;">Ethik</div>
<div class="t" style="left:598px;top:476px;transform:scaleX(1.0423);transform-origin:0 0;">Pflichtunt</div>
<div class="t" style="left:772.88px;top:476px;">1</div>
<div class="t" style="left:817.88px;top:476px;">1</div>
<div class="t" style="left:862.88px;top:476px;">1</div>
<div class="t" style="left:907.88px;top:476px;">1</div>
<div class="t" style="left:1370.3px;top:476px;transform:scaleX(0.9062);transform-origin:0 0;">1-6</div>
<div class="t" style="left:1442.3px;top:476px;transform:scaleX(0.9062);transform-origin:0 0;">1-6</div>
<div class="t" style="left:1513.7px;top:476px;letter-spacing:0.245px;">Wort</div>
<div class="t" style="left:916.5px;top:476px;letter-spacing:-0.214px;">Ethik</div>
<div style="left:1570px;top:476px;width:19px;height:17px;border:1px solid #1c3f7c;border-radius:3px;background:linear-gradient(#d4e2fb,#a9c0ee 45%,#8ca7e0);box-shadow:inset 1px 1px 0 rgba(255,255,255,.85);"></div>
<svg style="left:1573.6px;top:477.5px" width="13" height="13" viewBox="0 0 13 13"><path d="M2.1 2.1 L10.9 10.9 M10.9 2.1 L2.1 10.9" stroke="#f64448" stroke-width="3.3" stroke-linecap="round"/><path d="M2.4 2.4 L10.6 10.6 M10.6 2.4 L2.4 10.6" stroke="#ff7478" stroke-width="1.5" stroke-linecap="round"/></svg>
<div style="left:18px;top:494px;width:579px;height:17px;background:#e8e8f1;"></div>
<div style="left:598px;top:494px;width:971px;height:17px;background:#ffffff;"></div>
<div style="left:18px;top:511px;width:1572px;height:1px;background:#adadb2;"></div>
<div class="t" style="left:49.88px;top:494px;">3</div>
<div class="t" style="left:58.5px;top:494px;transform:scaleX(0.9327);transform-origin:0 0;">Fach</div>
<div class="t" style="left:301.5px;top:494px;letter-spacing:-0.118px;">Evang.Religionslehre</div>
<div class="t" style="left:598px;top:494px;transform:scaleX(1.0423);transform-origin:0 0;">Pflichtunt</div>
<div class="t" style="left:772.88px;top:494px;">1</div>
<div class="t" style="left:817.88px;top:494px;">1</div>
<div class="t" style="left:862.88px;top:494px;">1</div>
<div class="t" style="left:907.88px;top:494px;">1</div>
<div class="t" style="left:1370.3px;top:494px;transform:scaleX(0.9062);transform-origin:0 0;">1-6</div>
<div class="t" style="left:1442.3px;top:494px;transform:scaleX(0.9062);transform-origin:0 0;">1-6</div>
<div class="t" style="left:1513.7px;top:494px;letter-spacing:0.245px;">Wort</div>
<div class="t" style="left:916.5px;top:494px;letter-spacing:-0.088px;">Evangelische Religionslehre</div>
<div style="left:1570px;top:494px;width:19px;height:17px;border:1px solid #1c3f7c;border-radius:3px;background:linear-gradient(#d4e2fb,#a9c0ee 45%,#8ca7e0);box-shadow:inset 1px 1px 0 rgba(255,255,255,.85);"></div>
<svg style="left:1573.6px;top:495.5px" width="13" height="13" viewBox="0 0 13 13"><path d="M2.1 2.1 L10.9 10.9 M10.9 2.1 L2.1 10.9" stroke="#f64448" stroke-width="3.3" stroke-linecap="round"/><path d="M2.4 2.4 L10.6 10.6 M10.6 2.4 L2.4 10.6" stroke="#ff7478" stroke-width="1.5" stroke-linecap="round"/></svg>
<div style="left:18px;top:512px;width:579px;height:17px;background:#cbd9f7;"></div>
<div style="left:598px;top:512px;width:971px;height:17px;background:#eaf0fe;"></div>
<div style="left:18px;top:529px;width:1572px;height:1px;background:#adadb2;"></div>
<div class="t" style="left:49.88px;top:512px;">4</div>
<div class="t" style="left:58.5px;top:512px;transform:scaleX(0.9327);transform-origin:0 0;">Fach</div>
<div class="t" style="left:301.5px;top:512px;transform:scaleX(0.9569);transform-origin:0 0;">Deutsch</div>
<div class="t" style="left:598px;top:512px;transform:scaleX(1.0423);transform-origin:0 0;">Pflichtunt</div>
<div class="t" style="left:772.88px;top:512px;">1</div>
<div class="t" style="left:817.88px;top:512px;">1</div>
<div class="t" style="left:862.88px;top:512px;">1</div>
<div class="t" style="left:907.88px;top:512px;">1</div>
<div class="t" style="left:1370.3px;top:512px;transform:scaleX(0.9062);transform-origin:0 0;">1-6</div>
<div class="t" style="left:1442.3px;top:512px;transform:scaleX(0.9062);transform-origin:0 0;">1-6</div>
<div class="t" style="left:1513.7px;top:512px;letter-spacing:0.245px;">Wort</div>
<div class="t" style="left:916.5px;top:512px;transform:scaleX(0.9569);transform-origin:0 0;">Deutsch</div>
<div style="left:1570px;top:512px;width:19px;height:17px;border:1px solid #1c3f7c;border-radius:3px;background:linear-gradient(#d4e2fb,#a9c0ee 45%,#8ca7e0);box-shadow:inset 1px 1px 0 rgba(255,255,255,.85);"></div>
<svg style="left:1573.6px;top:513.5px" width="13" height="13" viewBox="0 0 13 13"><path d="M2.1 2.1 L10.9 10.9 M10.9 2.1 L2.1 10.9" stroke="#f64448" stroke-width="3.3" stroke-linecap="round"/><path d="M2.4 2.4 L10.6 10.6 M10.6 2.4 L2.4 10.6" stroke="#ff7478" stroke-width="1.5" stroke-linecap="round"/></svg>
<div style="left:18px;top:530px;width:579px;height:17px;background:#e8e8f1;"></div>
<div style="left:598px;top:530px;width:971px;height:17px;background:#ffffff;"></div>
<div style="left:18px;top:547px;width:1572px;height:1px;background:#adadb2;"></div>
<div class="t" style="left:49.88px;top:530px;">5</div>
<div class="t" style="left:58.5px;top:530px;transform:scaleX(0.9327);transform-origin:0 0;">Fach</div>
<div class="t" style="left:301.5px;top:530px;letter-spacing:-0.137px;">Englisch I</div>
<div class="t" style="left:598px;top:530px;transform:scaleX(1.0423);transform-origin:0 0;">Pflichtunt</div>
<div class="t" style="left:772.88px;top:530px;">1</div>
<div class="t" style="left:817.88px;top:530px;">1</div>
<div class="t" style="left:862.88px;top:530px;">1</div>
<div class="t" style="left:907.88px;top:530px;">1</div>
<div class="t" style="left:1370.3px;top:530px;transform:scaleX(0.9062);transform-origin:0 0;">1-6</div>
<div class="t" style="left:1442.3px;top:530px;transform:scaleX(0.9062);transform-origin:0 0;">1-6</div>
<div class="t" style="left:1513.7px;top:530px;letter-spacing:0.245px;">Wort</div>
<div class="t" style="left:916.5px;top:530px;letter-spacing:-0.137px;">Englisch I</div>
<div style="left:1570px;top:530px;width:19px;height:17px;border:1px solid #1c3f7c;border-radius:3px;background:linear-gradient(#d4e2fb,#a9c0ee 45%,#8ca7e0);box-shadow:inset 1px 1px 0 rgba(255,255,255,.85);"></div>
<svg style="left:1573.6px;top:531.5px" width="13" height="13" viewBox="0 0 13 13"><path d="M2.1 2.1 L10.9 10.9 M10.9 2.1 L2.1 10.9" stroke="#f64448" stroke-width="3.3" stroke-linecap="round"/><path d="M2.4 2.4 L10.6 10.6 M10.6 2.4 L2.4 10.6" stroke="#ff7478" stroke-width="1.5" stroke-linecap="round"/></svg>
<div style="left:18px;top:548px;width:579px;height:17px;background:#cbd9f7;"></div>
<div style="left:598px;top:548px;width:971px;height:17px;background:#eaf0fe;"></div>
<div style="left:18px;top:565px;width:1572px;height:1px;background:#adadb2;"></div>
<div class="t" style="left:49.88px;top:548px;">6</div>
<div class="t" style="left:58.5px;top:548px;transform:scaleX(0.9327);transform-origin:0 0;">Fach</div>
<div class="t" style="left:301.5px;top:548px;letter-spacing:-0.033px;">Wirtsch.-/Sozialkunde</div>
<div class="t" style="left:598px;top:548px;transform:scaleX(1.0423);transform-origin:0 0;">Pflichtunt</div>
<div class="t" style="left:772.88px;top:548px;">1</div>
<div class="t" style="left:817.88px;top:548px;">1</div>
<div class="t" style="left:862.88px;top:548px;">1</div>
<div class="t" style="left:907.88px;top:548px;">1</div>
<div class="t" style="left:1370.3px;top:548px;transform:scaleX(0.9062);transform-origin:0 0;">1-6</div>
<div class="t" style="left:1442.3px;top:548px;transform:scaleX(0.9062);transform-origin:0 0;">1-6</div>
<div class="t" style="left:1513.7px;top:548px;letter-spacing:0.245px;">Wort</div>
<div class="t" style="left:916.5px;top:548px;letter-spacing:-0.023px;">Wirtschafts- und Sozialkunde</div>
<div style="left:1570px;top:548px;width:19px;height:17px;border:1px solid #1c3f7c;border-radius:3px;background:linear-gradient(#d4e2fb,#a9c0ee 45%,#8ca7e0);box-shadow:inset 1px 1px 0 rgba(255,255,255,.85);"></div>
<svg style="left:1573.6px;top:549.5px" width="13" height="13" viewBox="0 0 13 13"><path d="M2.1 2.1 L10.9 10.9 M10.9 2.1 L2.1 10.9" stroke="#f64448" stroke-width="3.3" stroke-linecap="round"/><path d="M2.4 2.4 L10.6 10.6 M10.6 2.4 L2.4 10.6" stroke="#ff7478" stroke-width="1.5" stroke-linecap="round"/></svg>
<div style="left:18px;top:566px;width:579px;height:17px;background:#e8e8f1;"></div>
<div style="left:598px;top:566px;width:971px;height:17px;background:#ffffff;"></div>
<div style="left:18px;top:583px;width:1572px;height:1px;background:#adadb2;"></div>
<div class="t" style="left:49.88px;top:566px;">7</div>
<div class="t" style="left:58.5px;top:566px;transform:scaleX(0.9327);transform-origin:0 0;">Fach</div>
<div class="t" style="left:301.5px;top:566px;letter-spacing:0.063px;">Mathematik I</div>
<div class="t" style="left:598px;top:566px;transform:scaleX(1.0423);transform-origin:0 0;">Pflichtunt</div>
<div class="t" style="left:772.88px;top:566px;">1</div>
<div class="t" style="left:817.88px;top:566px;">1</div>
<div class="t" style="left:862.88px;top:566px;">1</div>
<div class="t" style="left:907.88px;top:566px;">1</div>
<div class="t" style="left:1370.3px;top:566px;transform:scaleX(0.9062);transform-origin:0 0;">1-6</div>
<div class="t" style="left:1442.3px;top:566px;transform:scaleX(0.9062);transform-origin:0 0;">1-6</div>
<div class="t" style="left:1513.7px;top:566px;letter-spacing:0.245px;">Wort</div>
<div class="t" style="left:916.5px;top:566px;letter-spacing:0.063px;">Mathematik I</div>
<div style="left:1570px;top:566px;width:19px;height:17px;border:1px solid #1c3f7c;border-radius:3px;background:linear-gradient(#d4e2fb,#a9c0ee 45%,#8ca7e0);box-shadow:inset 1px 1px 0 rgba(255,255,255,.85);"></div>
<svg style="left:1573.6px;top:567.5px" width="13" height="13" viewBox="0 0 13 13"><path d="M2.1 2.1 L10.9 10.9 M10.9 2.1 L2.1 10.9" stroke="#f64448" stroke-width="3.3" stroke-linecap="round"/><path d="M2.4 2.4 L10.6 10.6 M10.6 2.4 L2.4 10.6" stroke="#ff7478" stroke-width="1.5" stroke-linecap="round"/></svg>
<div style="left:18px;top:584px;width:579px;height:17px;background:#cbd9f7;"></div>
<div style="left:598px;top:584px;width:971px;height:17px;background:#eaf0fe;"></div>
<div style="left:18px;top:601px;width:1572px;height:1px;background:#adadb2;"></div>
<div class="t" style="left:49.88px;top:584px;">8</div>
<div class="t" style="left:58.5px;top:584px;transform:scaleX(0.9327);transform-origin:0 0;">Fach</div>
<div class="t" style="left:301.5px;top:584px;letter-spacing:0.001px;">Technologie</div>
<div class="t" style="left:598px;top:584px;transform:scaleX(1.0423);transform-origin:0 0;">Pflichtunt</div>
<div class="t" style="left:772.88px;top:584px;">1</div>
<div class="t" style="left:817.88px;top:584px;">1</div>
<div class="t" style="left:862.88px;top:584px;">1</div>
<div class="t" style="left:907.88px;top:584px;">1</div>
<div class="t" style="left:1370.3px;top:584px;transform:scaleX(0.9062);transform-origin:0 0;">1-6</div>
<div class="t" style="left:1442.3px;top:584px;transform:scaleX(0.9062);transform-origin:0 0;">1-6</div>
<div class="t" style="left:1513.7px;top:584px;letter-spacing:0.245px;">Wort</div>
<div class="t" style="left:916.5px;top:584px;letter-spacing:0.001px;">Technologie</div>
<div style="left:1570px;top:584px;width:19px;height:17px;border:1px solid #1c3f7c;border-radius:3px;background:linear-gradient(#d4e2fb,#a9c0ee 45%,#8ca7e0);box-shadow:inset 1px 1px 0 rgba(255,255,255,.85);"></div>
<svg style="left:1573.6px;top:585.5px" width="13" height="13" viewBox="0 0 13 13"><path d="M2.1 2.1 L10.9 10.9 M10.9 2.1 L2.1 10.9" stroke="#f64448" stroke-width="3.3" stroke-linecap="round"/><path d="M2.4 2.4 L10.6 10.6 M10.6 2.4 L2.4 10.6" stroke="#ff7478" stroke-width="1.5" stroke-linecap="round"/></svg>
<div style="left:18px;top:602px;width:579px;height:17px;background:#e8e8f1;"></div>
<div style="left:598px;top:602px;width:971px;height:17px;background:#ffffff;"></div>
<div style="left:18px;top:619px;width:1572px;height:1px;background:#adadb2;"></div>
<div class="t" style="left:49.88px;top:602px;">9</div>
<div class="t" style="left:58.5px;top:602px;transform:scaleX(0.9327);transform-origin:0 0;">Fach</div>
<div class="t" style="left:301.5px;top:602px;letter-spacing:-0.118px;">Design-/Kostümge.</div>
<div class="t" style="left:598px;top:602px;transform:scaleX(1.0423);transform-origin:0 0;">Pflichtunt</div>
<div class="t" style="left:772.88px;top:602px;">1</div>
<div class="t" style="left:817.88px;top:602px;">1</div>
<div class="t" style="left:862.88px;top:602px;">1</div>
<div class="t" style="left:907.88px;top:602px;">1</div>
<div class="t" style="left:1370.3px;top:602px;transform:scaleX(0.9062);transform-origin:0 0;">1-6</div>
<div class="t" style="left:1442.3px;top:602px;transform:scaleX(0.9062);transform-origin:0 0;">1-6</div>
<div class="t" style="left:1513.7px;top:602px;letter-spacing:0.245px;">Wort</div>
<div class="t" style="left:916.5px;top:602px;letter-spacing:-0.131px;">Design- und Kostümgeschichte</div>
<div style="left:1570px;top:602px;width:19px;height:17px;border:1px solid #1c3f7c;border-radius:3px;background:linear-gradient(#d4e2fb,#a9c0ee 45%,#8ca7e0);box-shadow:inset 1px 1px 0 rgba(255,255,255,.85);"></div>
<svg style="left:1573.6px;top:603.5px" width="13" height="13" viewBox="0 0 13 13"><path d="M2.1 2.1 L10.9 10.9 M10.9 2.1 L2.1 10.9" stroke="#f64448" stroke-width="3.3" stroke-linecap="round"/><path d="M2.4 2.4 L10.6 10.6 M10.6 2.4 L2.4 10.6" stroke="#ff7478" stroke-width="1.5" stroke-linecap="round"/></svg>
<div style="left:18px;top:620px;width:579px;height:17px;background:#cbd9f7;"></div>
<div style="left:598px;top:620px;width:971px;height:17px;background:#eaf0fe;"></div>
<div style="left:18px;top:637px;width:1572px;height:1px;background:#adadb2;"></div>
<div class="t" style="left:43.76px;top:620px;">10</div>
<div class="t" style="left:58.5px;top:620px;transform:scaleX(0.9327);transform-origin:0 0;">Fach</div>
<div class="t" style="left:301.5px;top:620px;letter-spacing:-0.036px;">Gestaltungslehre</div>
<div class="t" style="left:598px;top:620px;transform:scaleX(1.0423);transform-origin:0 0;">Pflichtunt</div>
<div class="t" style="left:772.88px;top:620px;">1</div>
<div class="t" style="left:817.88px;top:620px;">1</div>
<div class="t" style="left:862.88px;top:620px;">1</div>
<div class="t" style="left:907.88px;top:620px;">1</div>
<div class="t" style="left:1370.3px;top:620px;transform:scaleX(0.9062);transform-origin:0 0;">1-6</div>
<div class="t" style="left:1442.3px;top:620px;transform:scaleX(0.9062);transform-origin:0 0;">1-6</div>
<div class="t" style="left:1513.7px;top:620px;letter-spacing:0.245px;">Wort</div>
<div class="t" style="left:916.5px;top:620px;letter-spacing:-0.036px;">Gestaltungslehre</div>
<div style="left:1570px;top:620px;width:19px;height:17px;border:1px solid #1c3f7c;border-radius:3px;background:linear-gradient(#d4e2fb,#a9c0ee 45%,#8ca7e0);box-shadow:inset 1px 1px 0 rgba(255,255,255,.85);"></div>
<svg style="left:1573.6px;top:621.5px" width="13" height="13" viewBox="0 0 13 13"><path d="M2.1 2.1 L10.9 10.9 M10.9 2.1 L2.1 10.9" stroke="#f64448" stroke-width="3.3" stroke-linecap="round"/><path d="M2.4 2.4 L10.6 10.6 M10.6 2.4 L2.4 10.6" stroke="#ff7478" stroke-width="1.5" stroke-linecap="round"/></svg>
<div style="left:18px;top:638px;width:579px;height:17px;background:#e8e8f1;"></div>
<div style="left:598px;top:638px;width:971px;height:17px;background:#ffffff;"></div>
<div style="left:18px;top:655px;width:1572px;height:1px;background:#adadb2;"></div>
<div class="t" style="left:44.58px;top:638px;">11</div>
<div class="t" style="left:58.5px;top:638px;transform:scaleX(0.9327);transform-origin:0 0;">Fach</div>
<div class="t" style="left:301.5px;top:638px;letter-spacing:-0.002px;">Modez./Illustr.m.Labor</div>
<div class="t" style="left:598px;top:638px;transform:scaleX(1.0423);transform-origin:0 0;">Pflichtunt</div>
<div class="t" style="left:772.88px;top:638px;">1</div>
<div class="t" style="left:817.88px;top:638px;">1</div>
<div class="t" style="left:862.88px;top:638px;">1</div>
<div class="t" style="left:907.88px;top:638px;">1</div>
<div class="t" style="left:1370.3px;top:638px;transform:scaleX(0.9062);transform-origin:0 0;">1-6</div>
<div class="t" style="left:1442.3px;top:638px;transform:scaleX(0.9062);transform-origin:0 0;">1-6</div>
<div class="t" style="left:1513.7px;top:638px;letter-spacing:0.245px;">Wort</div>
<div class="t" style="left:916.5px;top:638px;letter-spacing:0.039px;">Modezeichnen/Illustration mit Labor</div>
<div style="left:1570px;top:638px;width:19px;height:17px;border:1px solid #1c3f7c;border-radius:3px;background:linear-gradient(#d4e2fb,#a9c0ee 45%,#8ca7e0);box-shadow:inset 1px 1px 0 rgba(255,255,255,.85);"></div>
<svg style="left:1573.6px;top:639.5px" width="13" height="13" viewBox="0 0 13 13"><path d="M2.1 2.1 L10.9 10.9 M10.9 2.1 L2.1 10.9" stroke="#f64448" stroke-width="3.3" stroke-linecap="round"/><path d="M2.4 2.4 L10.6 10.6 M10.6 2.4 L2.4 10.6" stroke="#ff7478" stroke-width="1.5" stroke-linecap="round"/></svg>
<div style="left:18px;top:656px;width:579px;height:17px;background:#cbd9f7;"></div>
<div style="left:598px;top:656px;width:971px;height:17px;background:#eaf0fe;"></div>
<div style="left:18px;top:673px;width:1572px;height:1px;background:#adadb2;"></div>
<div class="t" style="left:43.76px;top:656px;">12</div>
<div class="t" style="left:58.5px;top:656px;transform:scaleX(0.9327);transform-origin:0 0;">Fach</div>
<div class="t" style="left:301.5px;top:656px;letter-spacing:0.001px;">Schnitttechnik</div>
<div class="t" style="left:598px;top:656px;transform:scaleX(1.0423);transform-origin:0 0;">Pflichtunt</div>
<div class="t" style="left:772.88px;top:656px;">1</div>
<div class="t" style="left:817.88px;top:656px;">1</div>
<div class="t" style="left:862.88px;top:656px;">1</div>
<div class="t" style="left:907.88px;top:656px;">1</div>
<div class="t" style="left:1370.3px;top:656px;transform:scaleX(0.9062);transform-origin:0 0;">1-6</div>
<div class="t" style="left:1442.3px;top:656px;transform:scaleX(0.9062);transform-origin:0 0;">1-6</div>
<div class="t" style="left:1513.7px;top:656px;letter-spacing:0.245px;">Wort</div>
<div class="t" style="left:916.5px;top:656px;letter-spacing:0.001px;">Schnitttechnik</div>
<div style="left:1570px;top:656px;width:19px;height:17px;border:1px solid #1c3f7c;border-radius:3px;background:linear-gradient(#d4e2fb,#a9c0ee 45%,#8ca7e0);box-shadow:inset 1px 1px 0 rgba(255,255,255,.85);"></div>
<svg style="left:1573.6px;top:657.5px" width="13" height="13" viewBox="0 0 13 13"><path d="M2.1 2.1 L10.9 10.9 M10.9 2.1 L2.1 10.9" stroke="#f64448" stroke-width="3.3" stroke-linecap="round"/><path d="M2.4 2.4 L10.6 10.6 M10.6 2.4 L2.4 10.6" stroke="#ff7478" stroke-width="1.5" stroke-linecap="round"/></svg>
<div style="left:18px;top:674px;width:579px;height:17px;background:#e8e8f1;"></div>
<div style="left:598px;top:674px;width:971px;height:17px;background:#ffffff;"></div>
<div style="left:18px;top:691px;width:1572px;height:1px;background:#adadb2;"></div>
<div class="t" style="left:43.76px;top:674px;">13</div>
<div class="t" style="left:58.5px;top:674px;transform:scaleX(0.9327);transform-origin:0 0;">Fach</div>
<div class="t" style="left:301.5px;top:674px;letter-spacing:-0.118px;">Computertech./CAD</div>
<div class="t" style="left:598px;top:674px;transform:scaleX(1.0423);transform-origin:0 0;">Pflichtunt</div>
<div class="t" style="left:772.88px;top:674px;">1</div>
<div class="t" style="left:817.88px;top:674px;">1</div>
<div class="t" style="left:862.88px;top:674px;">1</div>
<div class="t" style="left:907.88px;top:674px;">1</div>
<div class="t" style="left:1370.3px;top:674px;transform:scaleX(0.9062);transform-origin:0 0;">1-6</div>
<div class="t" style="left:1442.3px;top:674px;transform:scaleX(0.9062);transform-origin:0 0;">1-6</div>
<div class="t" style="left:1513.7px;top:674px;letter-spacing:0.245px;">Wort</div>
<div class="t" style="left:916.5px;top:674px;letter-spacing:-0.105px;">Computertechnik / CAD</div>
<div style="left:1570px;top:674px;width:19px;height:17px;border:1px solid #1c3f7c;border-radius:3px;background:linear-gradient(#d4e2fb,#a9c0ee 45%,#8ca7e0);box-shadow:inset 1px 1px 0 rgba(255,255,255,.85);"></div>
<svg style="left:1573.6px;top:675.5px" width="13" height="13" viewBox="0 0 13 13"><path d="M2.1 2.1 L10.9 10.9 M10.9 2.1 L2.1 10.9" stroke="#f64448" stroke-width="3.3" stroke-linecap="round"/><path d="M2.4 2.4 L10.6 10.6 M10.6 2.4 L2.4 10.6" stroke="#ff7478" stroke-width="1.5" stroke-linecap="round"/></svg>
<div style="left:18px;top:692px;width:579px;height:17px;background:#cbd9f7;"></div>
<div style="left:598px;top:692px;width:971px;height:17px;background:#eaf0fe;"></div>
<div style="left:18px;top:709px;width:1572px;height:1px;background:#adadb2;"></div>
<div class="t" style="left:43.76px;top:692px;">14</div>
<div class="t" style="left:58.5px;top:692px;transform:scaleX(0.9327);transform-origin:0 0;">Fach</div>
<div class="t" style="left:301.5px;top:692px;letter-spacing:0.03px;">Realisation</div>
<div class="t" style="left:598px;top:692px;transform:scaleX(1.0423);transform-origin:0 0;">Pflichtunt</div>
<div class="t" style="left:772.88px;top:692px;">1</div>
<div class="t" style="left:817.88px;top:692px;">1</div>
<div class="t" style="left:862.88px;top:692px;">1</div>
<div class="t" style="left:907.88px;top:692px;">1</div>
<div class="t" style="left:1370.3px;top:692px;transform:scaleX(0.9062);transform-origin:0 0;">1-6</div>
<div class="t" style="left:1442.3px;top:692px;transform:scaleX(0.9062);transform-origin:0 0;">1-6</div>
<div class="t" style="left:1513.7px;top:692px;letter-spacing:0.245px;">Wort</div>
<div class="t" style="left:916.5px;top:692px;letter-spacing:0.03px;">Realisation</div>
<div style="left:1570px;top:692px;width:19px;height:17px;border:1px solid #1c3f7c;border-radius:3px;background:linear-gradient(#d4e2fb,#a9c0ee 45%,#8ca7e0);box-shadow:inset 1px 1px 0 rgba(255,255,255,.85);"></div>
<svg style="left:1573.6px;top:693.5px" width="13" height="13" viewBox="0 0 13 13"><path d="M2.1 2.1 L10.9 10.9 M10.9 2.1 L2.1 10.9" stroke="#f64448" stroke-width="3.3" stroke-linecap="round"/><path d="M2.4 2.4 L10.6 10.6 M10.6 2.4 L2.4 10.6" stroke="#ff7478" stroke-width="1.5" stroke-linecap="round"/></svg>
<div style="left:18px;top:710px;width:579px;height:17px;background:#e8e8f1;"></div>
<div style="left:598px;top:710px;width:971px;height:17px;background:#ffffff;"></div>
<div style="left:18px;top:727px;width:1572px;height:1px;background:#adadb2;"></div>
<div class="t" style="left:43.76px;top:710px;">15</div>
<div class="t" style="left:58.5px;top:710px;transform:scaleX(0.9327);transform-origin:0 0;">Fach</div>
<div class="t" style="left:301.5px;top:710px;letter-spacing:-0.059px;">Modegestaltung</div>
<div class="t" style="left:598px;top:710px;transform:scaleX(1.0423);transform-origin:0 0;">Pflichtunt</div>
<div class="t" style="left:772.88px;top:710px;">1</div>
<div class="t" style="left:817.88px;top:710px;">1</div>
<div class="t" style="left:862.88px;top:710px;">1</div>
<div class="t" style="left:907.88px;top:710px;">1</div>
<div class="t" style="left:1370.3px;top:710px;transform:scaleX(0.9062);transform-origin:0 0;">1-6</div>
<div class="t" style="left:1442.3px;top:710px;transform:scaleX(0.9062);transform-origin:0 0;">1-6</div>
<div class="t" style="left:1513.7px;top:710px;letter-spacing:0.245px;">Wort</div>
<div class="t" style="left:916.5px;top:710px;letter-spacing:-0.059px;">Modegestaltung</div>
<div style="left:1570px;top:710px;width:19px;height:17px;border:1px solid #1c3f7c;border-radius:3px;background:linear-gradient(#d4e2fb,#a9c0ee 45%,#8ca7e0);box-shadow:inset 1px 1px 0 rgba(255,255,255,.85);"></div>
<svg style="left:1573.6px;top:711.5px" width="13" height="13" viewBox="0 0 13 13"><path d="M2.1 2.1 L10.9 10.9 M10.9 2.1 L2.1 10.9" stroke="#f64448" stroke-width="3.3" stroke-linecap="round"/><path d="M2.4 2.4 L10.6 10.6 M10.6 2.4 L2.4 10.6" stroke="#ff7478" stroke-width="1.5" stroke-linecap="round"/></svg>
<div style="left:18px;top:728px;width:579px;height:17px;background:#cbd9f7;"></div>
<div style="left:598px;top:728px;width:971px;height:17px;background:#eaf0fe;"></div>
<div style="left:18px;top:745px;width:1572px;height:1px;background:#adadb2;"></div>
<div class="t" style="left:43.76px;top:728px;">16</div>
<div class="t" style="left:58.5px;top:728px;transform:scaleX(0.9327);transform-origin:0 0;">Fach</div>
<div class="t" style="left:301.5px;top:728px;letter-spacing:0.117px;">Projektarbeit</div>
<div class="t" style="left:598px;top:728px;transform:scaleX(1.0423);transform-origin:0 0;">Pflichtunt</div>
<div class="t" style="left:772.88px;top:728px;">1</div>
<div class="t" style="left:817.88px;top:728px;">1</div>
<div class="t" style="left:862.88px;top:728px;">1</div>
<div class="t" style="left:907.88px;top:728px;">1</div>
<div class="t" style="left:1370.3px;top:728px;transform:scaleX(0.9062);transform-origin:0 0;">1-6</div>
<div class="t" style="left:1442.3px;top:728px;transform:scaleX(0.9062);transform-origin:0 0;">1-6</div>
<div class="t" style="left:1513.7px;top:728px;letter-spacing:0.245px;">Wort</div>
<div class="t" style="left:916.5px;top:728px;letter-spacing:0.117px;">Projektarbeit</div>
<div style="left:1570px;top:728px;width:19px;height:17px;border:1px solid #1c3f7c;border-radius:3px;background:linear-gradient(#d4e2fb,#a9c0ee 45%,#8ca7e0);box-shadow:inset 1px 1px 0 rgba(255,255,255,.85);"></div>
<svg style="left:1573.6px;top:729.5px" width="13" height="13" viewBox="0 0 13 13"><path d="M2.1 2.1 L10.9 10.9 M10.9 2.1 L2.1 10.9" stroke="#f64448" stroke-width="3.3" stroke-linecap="round"/><path d="M2.4 2.4 L10.6 10.6 M10.6 2.4 L2.4 10.6" stroke="#ff7478" stroke-width="1.5" stroke-linecap="round"/></svg>
<div style="left:18px;top:746px;width:579px;height:17px;background:#e8e8f1;"></div>
<div style="left:598px;top:746px;width:971px;height:17px;background:#ffffff;"></div>
<div style="left:18px;top:763px;width:1572px;height:1px;background:#adadb2;"></div>
<div class="t" style="left:43.76px;top:746px;">17</div>
<div class="t" style="left:58.5px;top:746px;transform:scaleX(0.9327);transform-origin:0 0;">Fach</div>
<div class="t" style="left:301.5px;top:746px;letter-spacing:-0.029px;">Englisch II</div>
<div class="t" style="left:598px;top:746px;letter-spacing:0.185px;">Wahlunt</div>
<div class="t" style="left:772.88px;top:746px;">1</div>
<div class="t" style="left:817.88px;top:746px;">1</div>
<div class="t" style="left:862.88px;top:746px;">1</div>
<div class="t" style="left:907.88px;top:746px;">1</div>
<div class="t" style="left:1370.3px;top:746px;transform:scaleX(0.9062);transform-origin:0 0;">1-6</div>
<div class="t" style="left:1442.3px;top:746px;transform:scaleX(0.9062);transform-origin:0 0;">1-6</div>
<div class="t" style="left:1513.7px;top:746px;letter-spacing:0.245px;">Wort</div>
<div class="t" style="left:916.5px;top:746px;letter-spacing:-0.029px;">Englisch II</div>
<div style="left:1570px;top:746px;width:19px;height:17px;border:1px solid #1c3f7c;border-radius:3px;background:linear-gradient(#d4e2fb,#a9c0ee 45%,#8ca7e0);box-shadow:inset 1px 1px 0 rgba(255,255,255,.85);"></div>
<svg style="left:1573.6px;top:747.5px" width="13" height="13" viewBox="0 0 13 13"><path d="M2.1 2.1 L10.9 10.9 M10.9 2.1 L2.1 10.9" stroke="#f64448" stroke-width="3.3" stroke-linecap="round"/><path d="M2.4 2.4 L10.6 10.6 M10.6 2.4 L2.4 10.6" stroke="#ff7478" stroke-width="1.5" stroke-linecap="round"/></svg>
<div style="left:18px;top:764px;width:579px;height:17px;background:#cbd9f7;"></div>
<div style="left:598px;top:764px;width:971px;height:17px;background:#eaf0fe;"></div>
<div style="left:18px;top:781px;width:1572px;height:1px;background:#adadb2;"></div>
<div class="t" style="left:43.76px;top:764px;">18</div>
<div class="t" style="left:58.5px;top:764px;transform:scaleX(0.9327);transform-origin:0 0;">Fach</div>
<div class="t" style="left:301.5px;top:764px;letter-spacing:0.128px;">Mathematik II</div>
<div class="t" style="left:598px;top:764px;letter-spacing:0.185px;">Wahlunt</div>
<div class="t" style="left:772.88px;top:764px;">1</div>
<div class="t" style="left:817.88px;top:764px;">1</div>
<div class="t" style="left:862.88px;top:764px;">1</div>
<div class="t" style="left:907.88px;top:764px;">1</div>
<div class="t" style="left:1370.3px;top:764px;transform:scaleX(0.9062);transform-origin:0 0;">1-6</div>
<div class="t" style="left:1442.3px;top:764px;transform:scaleX(0.9062);transform-origin:0 0;">1-6</div>
<div class="t" style="left:1513.7px;top:764px;letter-spacing:0.245px;">Wort</div>
<div class="t" style="left:916.5px;top:764px;letter-spacing:0.128px;">Mathematik II</div>
<div style="left:1570px;top:764px;width:19px;height:17px;border:1px solid #1c3f7c;border-radius:3px;background:linear-gradient(#d4e2fb,#a9c0ee 45%,#8ca7e0);box-shadow:inset 1px 1px 0 rgba(255,255,255,.85);"></div>
<svg style="left:1573.6px;top:765.5px" width="13" height="13" viewBox="0 0 13 13"><path d="M2.1 2.1 L10.9 10.9 M10.9 2.1 L2.1 10.9" stroke="#f64448" stroke-width="3.3" stroke-linecap="round"/><path d="M2.4 2.4 L10.6 10.6 M10.6 2.4 L2.4 10.6" stroke="#ff7478" stroke-width="1.5" stroke-linecap="round"/></svg>
<div style="left:18px;top:782px;width:39px;height:17px;background:#e8e8f1;"></div>
<div style="left:58px;top:782px;width:539px;height:17px;background:#ffffff;"></div>
<div style="left:598px;top:782px;width:317px;height:17px;background:#e8e8f1;"></div>
<div style="left:916px;top:782px;width:452px;height:17px;background:#ffffff;"></div>
<div style="left:1369px;top:782px;width:200px;height:17px;background:#e8e8f1;"></div>
<div style="left:18px;top:799px;width:1572px;height:1px;background:#adadb2;"></div>
<div class="t" style="left:43.76px;top:782px;">19</div>
<div class="t" style="left:58.5px;top:782px;transform:scaleX(0.9624);transform-origin:0 0;">Bemerkungen</div>
<div class="t" style="left:301.5px;top:782px;transform:scaleX(0.9624);transform-origin:0 0;">Bemerkungen</div>
<div class="t" style="left:916.5px;top:782px;transform:scaleX(0.9624);transform-origin:0 0;">Bemerkungen</div>
<div style="left:1570px;top:782px;width:19px;height:17px;border:1px solid #1c3f7c;border-radius:3px;background:linear-gradient(#d4e2fb,#a9c0ee 45%,#8ca7e0);box-shadow:inset 1px 1px 0 rgba(255,255,255,.85);"></div>
<svg style="left:1573.6px;top:783.5px" width="13" height="13" viewBox="0 0 13 13"><path d="M2.1 2.1 L10.9 10.9 M10.9 2.1 L2.1 10.9" stroke="#f64448" stroke-width="3.3" stroke-linecap="round"/><path d="M2.4 2.4 L10.6 10.6 M10.6 2.4 L2.4 10.6" stroke="#ff7478" stroke-width="1.5" stroke-linecap="round"/></svg>
<div style="left:18px;top:800px;width:39px;height:17px;background:#cbd9f7;"></div>
<div style="left:58px;top:800px;width:539px;height:17px;background:#eaf0fe;"></div>
<div style="left:598px;top:800px;width:317px;height:17px;background:#cbd9f7;"></div>
<div style="left:916px;top:800px;width:452px;height:17px;background:#eaf0fe;"></div>
<div style="left:1369px;top:800px;width:200px;height:17px;background:#cbd9f7;"></div>
<div style="left:18px;top:817px;width:1572px;height:1px;background:#adadb2;"></div>
<div class="t" style="left:43.76px;top:800px;">20</div>
<div class="t" style="left:58.5px;top:800px;transform:scaleX(1.0382);transform-origin:0 0;">gefährdet</div>
<div class="t" style="left:301.5px;top:800px;transform:scaleX(1.0382);transform-origin:0 0;">gefährdet</div>
<div class="t" style="left:916.5px;top:800px;transform:scaleX(1.0382);transform-origin:0 0;">gefährdet</div>
<div style="left:1570px;top:800px;width:19px;height:17px;border:1px solid #1c3f7c;border-radius:3px;background:linear-gradient(#d4e2fb,#a9c0ee 45%,#8ca7e0);box-shadow:inset 1px 1px 0 rgba(255,255,255,.85);"></div>
<svg style="left:1573.6px;top:801.5px" width="13" height="13" viewBox="0 0 13 13"><path d="M2.1 2.1 L10.9 10.9 M10.9 2.1 L2.1 10.9" stroke="#f64448" stroke-width="3.3" stroke-linecap="round"/><path d="M2.4 2.4 L10.6 10.6 M10.6 2.4 L2.4 10.6" stroke="#ff7478" stroke-width="1.5" stroke-linecap="round"/></svg>
<div style="left:18px;top:818px;width:39px;height:17px;background:#e8e8f1;"></div>
<div style="left:58px;top:818px;width:539px;height:17px;background:#ffffff;"></div>
<div style="left:598px;top:818px;width:317px;height:17px;background:#e8e8f1;"></div>
<div style="left:916px;top:818px;width:452px;height:17px;background:#ffffff;"></div>
<div style="left:1369px;top:818px;width:200px;height:17px;background:#e8e8f1;"></div>
<div style="left:18px;top:835px;width:1572px;height:1px;background:#adadb2;"></div>
<div class="t" style="left:43.76px;top:818px;">21</div>
<div class="t" style="left:58.5px;top:818px;letter-spacing:-0.222px;">Abgang</div>
<div class="t" style="left:301.5px;top:818px;letter-spacing:-0.222px;">Abgang</div>
<div class="t" style="left:916.5px;top:818px;letter-spacing:-0.222px;">Abgang</div>
<div style="left:1570px;top:818px;width:19px;height:17px;border:1px solid #1c3f7c;border-radius:3px;background:linear-gradient(#d4e2fb,#a9c0ee 45%,#8ca7e0);box-shadow:inset 1px 1px 0 rgba(255,255,255,.85);"></div>
<svg style="left:1573.6px;top:819.5px" width="13" height="13" viewBox="0 0 13 13"><path d="M2.1 2.1 L10.9 10.9 M10.9 2.1 L2.1 10.9" stroke="#f64448" stroke-width="3.3" stroke-linecap="round"/><path d="M2.4 2.4 L10.6 10.6 M10.6 2.4 L2.4 10.6" stroke="#ff7478" stroke-width="1.5" stroke-linecap="round"/></svg>
<div style="left:18px;top:836px;width:39px;height:17px;background:#cbd9f7;"></div>
<div style="left:58px;top:836px;width:539px;height:17px;background:#eaf0fe;"></div>
<div style="left:598px;top:836px;width:317px;height:17px;background:#cbd9f7;"></div>
<div style="left:916px;top:836px;width:452px;height:17px;background:#eaf0fe;"></div>
<div style="left:1369px;top:836px;width:200px;height:17px;background:#cbd9f7;"></div>
<div style="left:18px;top:853px;width:1572px;height:1px;background:#adadb2;"></div>
<div class="t" style="left:43.76px;top:836px;">22</div>
<div class="t" style="left:58.5px;top:836px;transform:scaleX(0.9589);transform-origin:0 0;">Lob / Preis</div>
<div class="t" style="left:301.5px;top:836px;transform:scaleX(0.9589);transform-origin:0 0;">Lob / Preis</div>
<div class="t" style="left:916.5px;top:836px;transform:scaleX(0.9589);transform-origin:0 0;">Lob / Preis</div>
<div style="left:1570px;top:836px;width:19px;height:17px;border:1px solid #1c3f7c;border-radius:3px;background:linear-gradient(#d4e2fb,#a9c0ee 45%,#8ca7e0);box-shadow:inset 1px 1px 0 rgba(255,255,255,.85);"></div>
<svg style="left:1573.6px;top:837.5px" width="13" height="13" viewBox="0 0 13 13"><path d="M2.1 2.1 L10.9 10.9 M10.9 2.1 L2.1 10.9" stroke="#f64448" stroke-width="3.3" stroke-linecap="round"/><path d="M2.4 2.4 L10.6 10.6 M10.6 2.4 L2.4 10.6" stroke="#ff7478" stroke-width="1.5" stroke-linecap="round"/></svg>
<div style="left:18px;top:854px;width:39px;height:17px;background:#e8e8f1;"></div>
<div style="left:58px;top:854px;width:539px;height:17px;background:#ffffff;"></div>
<div style="left:598px;top:854px;width:317px;height:17px;background:#e8e8f1;"></div>
<div style="left:916px;top:854px;width:452px;height:17px;background:#ffffff;"></div>
<div style="left:1369px;top:854px;width:200px;height:17px;background:#e8e8f1;"></div>
<div style="left:18px;top:871px;width:1572px;height:1px;background:#adadb2;"></div>
<div class="t" style="left:43.76px;top:854px;">23</div>
<div class="t" style="left:58.5px;top:854px;letter-spacing:-0.007px;">Durchschnitt 1</div>
<div class="t" style="left:301.5px;top:854px;letter-spacing:-0.007px;">Durchschnitt 1</div>
<div class="t" style="left:916.5px;top:854px;letter-spacing:-0.007px;">Durchschnitt 1</div>
<div style="left:1570px;top:854px;width:19px;height:17px;border:1px solid #1c3f7c;border-radius:3px;background:linear-gradient(#d4e2fb,#a9c0ee 45%,#8ca7e0);box-shadow:inset 1px 1px 0 rgba(255,255,255,.85);"></div>
<svg style="left:1573.6px;top:855.5px" width="13" height="13" viewBox="0 0 13 13"><path d="M2.1 2.1 L10.9 10.9 M10.9 2.1 L2.1 10.9" stroke="#f64448" stroke-width="3.3" stroke-linecap="round"/><path d="M2.4 2.4 L10.6 10.6 M10.6 2.4 L2.4 10.6" stroke="#ff7478" stroke-width="1.5" stroke-linecap="round"/></svg>
<div style="left:18px;top:872px;width:1494px;height:17px;background:#3e81ff;"></div>
<div style="left:1513px;top:872px;width:56px;height:17px;background:#b4b8c0;"></div>
<div style="left:1513px;top:873px;width:55px;height:16px;background:#55acff;"></div>
<div class="t w" style="left:43.76px;top:872px;">24</div>
<div style="left:1570px;top:872px;width:19px;height:17px;border:1px solid #1c3f7c;border-radius:3px;background:linear-gradient(#d4e2fb,#a9c0ee 45%,#8ca7e0);box-shadow:inset 1px 1px 0 rgba(255,255,255,.85);"></div>
<svg style="left:1573.6px;top:873.5px" width="13" height="13" viewBox="0 0 13 13"><path d="M2.1 2.1 L10.9 10.9 M10.9 2.1 L2.1 10.9" stroke="#f64448" stroke-width="3.3" stroke-linecap="round"/><path d="M2.4 2.4 L10.6 10.6 M10.6 2.4 L2.4 10.6" stroke="#ff7478" stroke-width="1.5" stroke-linecap="round"/></svg>
<div style="left:57px;top:458px;width:1px;height:419px;background:#adadb2;"></div>
<div style="left:300px;top:458px;width:1px;height:419px;background:#adadb2;"></div>
<div style="left:597px;top:458px;width:1px;height:419px;background:#adadb2;"></div>
<div style="left:735px;top:458px;width:1px;height:419px;background:#adadb2;"></div>
<div style="left:780px;top:458px;width:1px;height:419px;background:#adadb2;"></div>
<div style="left:825px;top:458px;width:1px;height:419px;background:#adadb2;"></div>
<div style="left:870px;top:458px;width:1px;height:419px;background:#adadb2;"></div>
<div style="left:915px;top:458px;width:1px;height:419px;background:#adadb2;"></div>
<div style="left:1368px;top:458px;width:1px;height:419px;background:#adadb2;"></div>
<div style="left:1440px;top:458px;width:1px;height:419px;background:#adadb2;"></div>
<div style="left:1512px;top:458px;width:1px;height:419px;background:#adadb2;"></div>
<div style="left:1569px;top:458px;width:1px;height:419px;background:#adadb2;"></div>
<div style="left:1589px;top:458px;width:1px;height:419px;background:#adadb2;"></div>
<div style="left:1590px;top:458px;width:18px;height:420px;background:#f5f5fc;"></div>
<div style="left:1591px;top:458px;width:16px;height:419px;background:#fdfdfe;"></div>
<div style="left:1593px;top:459px;width:12px;height:15px;background:linear-gradient(#fbfbfc,#f0f0f1 50%,#e1e1e3);"></div>
<svg style="left:1593px;top:462.5px" width="12" height="9" viewBox="0 0 12 9"><path d="M1.4 6.6 L5.9 2.4 L10.4 6.6" stroke="#cfcfd1" stroke-width="2.1" fill="none"/></svg>
</div>
</div>
</body>
</html>
